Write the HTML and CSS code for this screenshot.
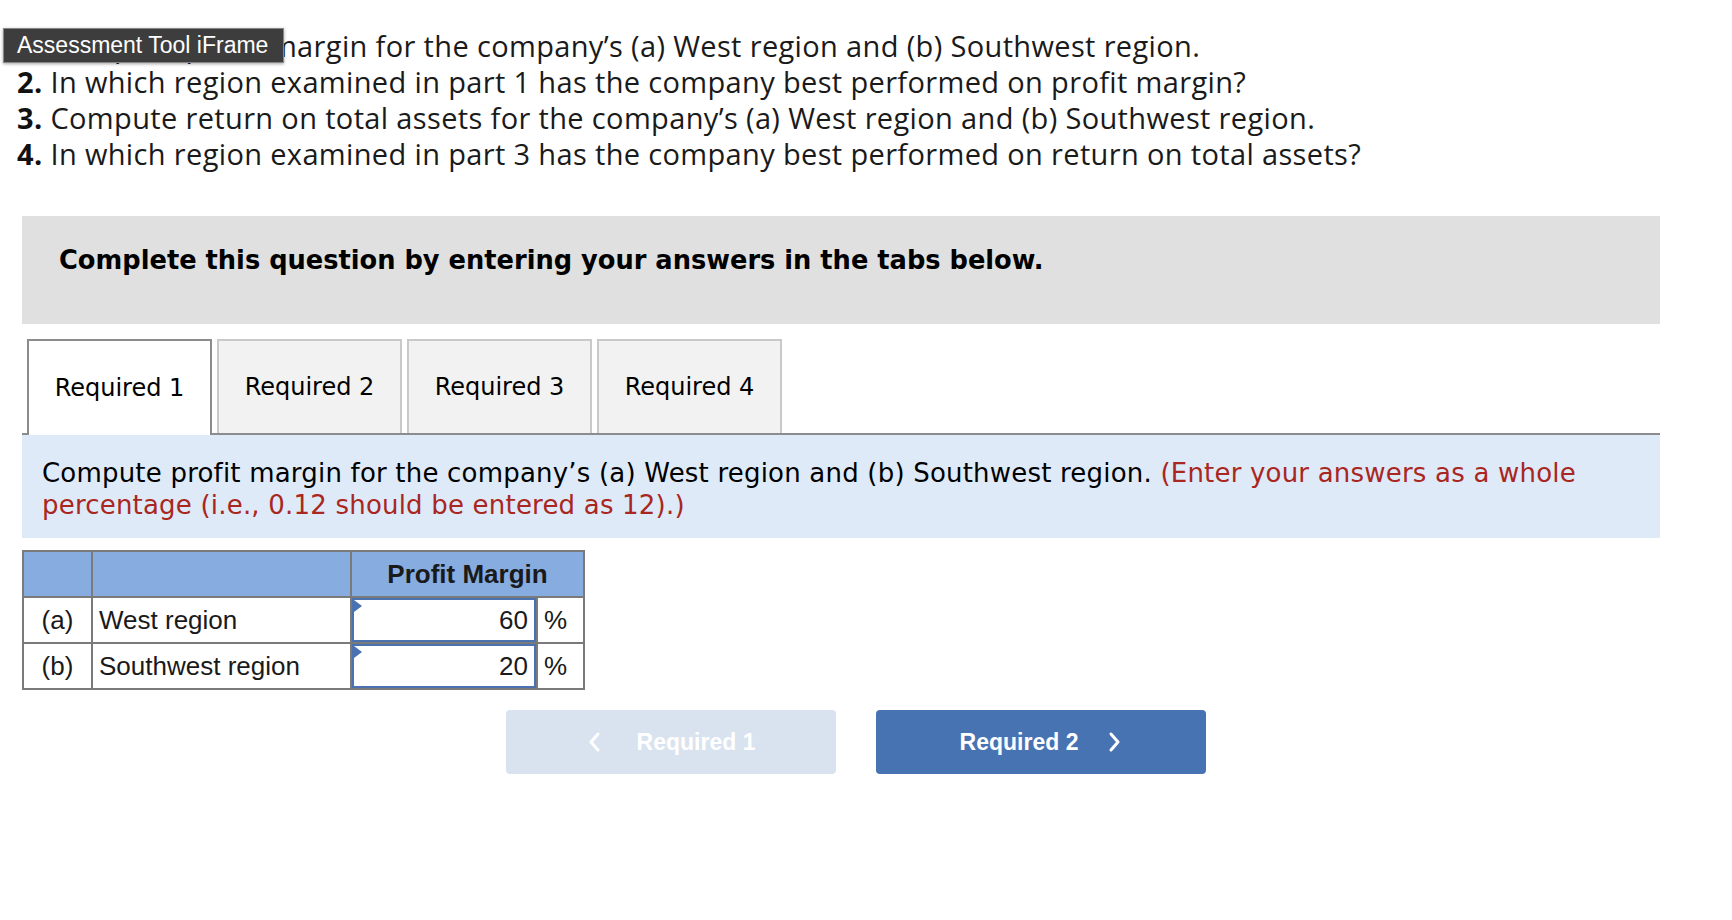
FILE: index.html
```html
<!DOCTYPE html>
<html lang="en">
<head>
    <meta charset="utf-8" />
    <title>Assessment</title>
    <link rel="stylesheet" href="styles.css">
</head>
<body>

    <div class="tip">Assessment Tool iFrame</div>

    <ol class="parts">
        <li><b>1.</b> Compute profit margin for the company’s (a) West region and (b) Southwest region.</li>
        <li><b>2.</b> In which region examined in part 1 has the company best performed on profit margin?</li>
        <li><b>3.</b> Compute return on total assets for the company’s (a) West region and (b) Southwest region.</li>
        <li><b>4.</b> In which region examined in part 3 has the company best performed on return on total assets?</li>
    </ol>

    <div class="notice">Complete this question by entering your answers in the tabs below.</div>

    <div class="tabs">
        <div class="tabs__tab tabs__tab--active">Required 1</div>
        <div class="tabs__tab">Required 2</div>
        <div class="tabs__tab">Required 3</div>
        <div class="tabs__tab">Required 4</div>
    </div>

    <div class="prompt">
        Compute profit margin for the company’s (a) West region and (b) Southwest region.
        <span class="prompt__hint">(Enter your answers as a whole percentage (i.e., 0.12 should be entered as 12).)</span>
    </div>

    <table class="grid">
        <tr class="grid__head">
            <th class="grid__key"></th>
            <th class="grid__label"></th>
            <th colspan="2">Profit Margin</th>
        </tr>
        <tr>
            <td class="grid__key">(a)</td>
            <td class="grid__label">West region</td>
            <td class="grid__input">60</td>
            <td class="grid__unit">%</td>
        </tr>
        <tr>
            <td class="grid__key">(b)</td>
            <td class="grid__label">Southwest region</td>
            <td class="grid__input">20</td>
            <td class="grid__unit">%</td>
        </tr>
    </table>

    <div class="nav">
        <div class="nav__btn nav__btn--prev">
            <svg width="14" height="22" viewBox="0 0 14 22"><path d="M11 3 L4 11 L11 19" fill="none" stroke="#fff" stroke-width="3" stroke-linecap="round" stroke-linejoin="round"/></svg>
            <span>Required 1</span>
        </div>
        <div class="nav__btn nav__btn--next">
            <span>Required 2</span>
            <svg width="14" height="22" viewBox="0 0 14 22"><path d="M3 3 L10 11 L3 19" fill="none" stroke="#fff" stroke-width="3" stroke-linecap="round" stroke-linejoin="round"/></svg>
        </div>
    </div>

</body>
</html>
```

FILE: styles.css
```css
* {
    box-sizing: border-box; margin: 0; padding: 0;
}
body {
    background: #fff; color: #000; font-family: "DejaVu Sans", Verdana, sans-serif;
}
.tip {
    position: absolute; top: 28px; left: 3px; width: 281px; height: 35px;
    background: #3d3d3d; color: #fff; border: 1px solid #888;
    font: 23px/33px "Liberation Sans", Arial, sans-serif;
    padding-left: 13px;
    box-shadow: 0 1px 3px rgba(0,0,0,.35);
}
.parts {
    list-style: none;
    padding: 28px 0 0 17px;
    font: 29px/36px "Open Sans", Lato, sans-serif;
    letter-spacing: 0.35px;
    color: #1a1a1a;
}
.parts b {
    font-weight: 700; color: #111;
}
.notice {
    margin: 44px 0 0 22px; width: 1638px; height: 108px;
    background: #e0e0e0;
    padding: 29px 0 0 37px;
    font-weight: bold; font-size: 25.7px; line-height: 30px;
}
.tabs {
    display: flex; gap: 5px;
    margin: 15px 0 0 22px; width: 1638px;
    padding-left: 5px;
    border-bottom: 2px solid #8c8c8c;
}
.tabs__tab {
    width: 185px; height: 94px;
    display: flex; align-items: center; justify-content: center;
    background: #f2f2f2; border: 2px solid #c9c9c9; border-bottom: 0;
    font-size: 24px;
}
.tabs__tab--active {
    background: #fff; border-color: #8c8c8c;
    margin-bottom: -2px; height: 96px;
}
.prompt {
    margin-left: 22px; width: 1638px;
    background: #deeaf8;
    padding: 22px 20px 17px 20px;
    font-size: 26px; line-height: 32px;
    letter-spacing: 0.2px;
}
.prompt__hint {
    color: #a92621;
}
.grid {
    margin: 12px 0 0 22px;
    border-collapse: collapse;
    font: 26px "Liberation Sans", Arial, sans-serif;
    color: #1a1a1a;
}
.grid td, .grid th {
    border: 2px solid #7a7a7a; height: 46px; padding: 0 6px;
}
.grid__head th {
    background: #86ace0; font-weight: bold;
}
.grid__key {
    width: 69px; text-align: center;
}
.grid__label {
    width: 259px; text-align: left;
}
.grid .grid__input {
    width: 186px; text-align: right; padding-right: 8px;
    border: 2px solid #7a7a7a;
    box-shadow: inset 0 0 0 2px #4a72b0;
    position: relative;
}
.grid__input:before {
    content: ""; position: absolute; top: 2px; left: 2px;
    border-top: 6px solid transparent; border-bottom: 6px solid transparent;
    border-left: 8px solid #4a72b0;
}
.grid__unit {
    width: 47px;
}
.nav {
    display: flex; gap: 40px;
    margin-top: 20px; padding-left: 506px;
}
.nav__btn {
    width: 330px; height: 64px; border-radius: 4px;
    display: flex; align-items: center; justify-content: center; gap: 30px;
    color: #fff; font: bold 23px "Liberation Sans", Arial, sans-serif;
}
.nav__btn--prev {
    background: #d9e3ef; gap: 36px;
}
.nav__btn--next {
    background: #4873b2;
}
```
